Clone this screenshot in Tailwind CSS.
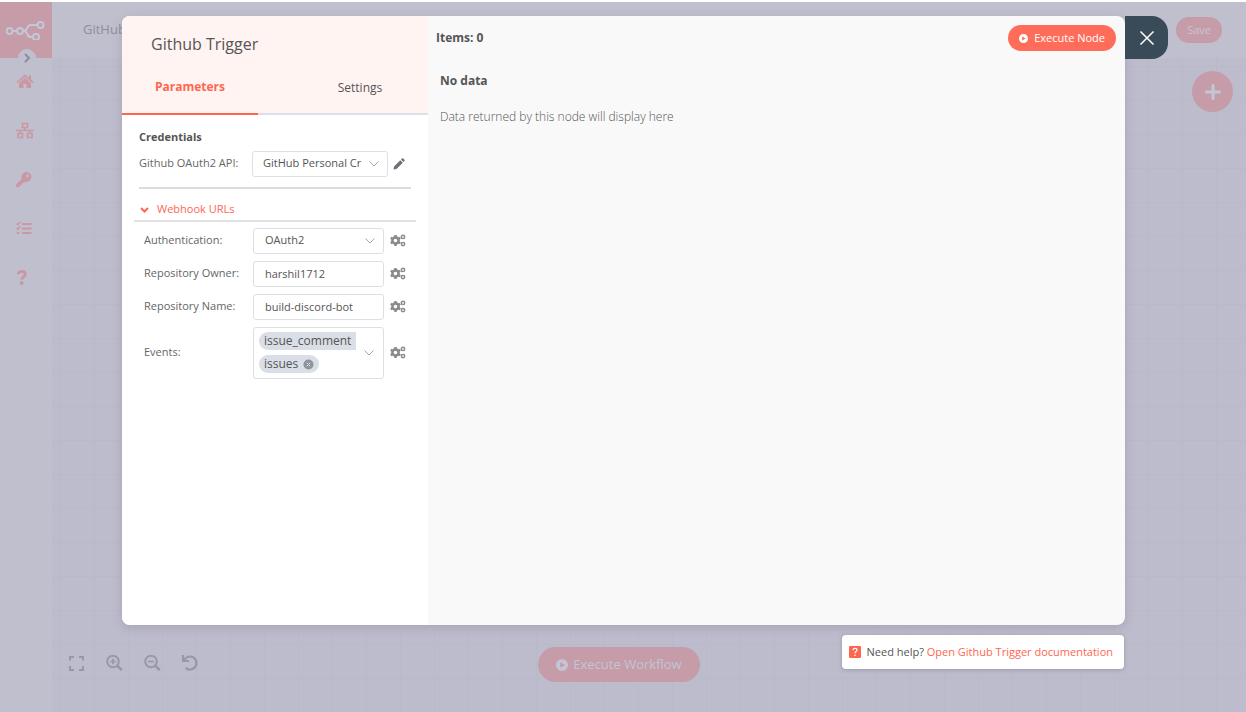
<!DOCTYPE html>
<html lang="en">
<head>
    <meta charset="UTF-8">
    <meta name="viewport" content="width=device-width, initial-scale=1.0">
    <title>GitHub - n8n</title>
    <script src="https://cdn.jsdelivr.net/npm/@tailwindcss/browser@4"></script>
</head>
<body class="h-screen overflow-hidden bg-white pt-[2px] font-['Open_Sans',sans-serif] text-[11px] text-[#555]">
    <svg class="hidden">
        <symbol id="chevron" viewBox="0 0 10 6"><path d="M.5.5 5 5 9.500.5" fill="none" stroke="#a3a6ad" /></symbol>
        <symbol id="play" viewBox="0 0 12 12"><path fill="currentColor" fill-rule="evenodd" d="M6 0a6 6 0 1 0 0 12A6 6 0 0 0 6 0ZM4.200 3.200 9 6 4.200 8.800Z" /></symbol>
        <symbol id="cogs" viewBox="0 0 16 13">
            <g fill="none" stroke="#8b8b8b">
                <circle cx="5.500" cy="6.500" r="3.100" stroke-width="2.600" />
                <path d="M5.500 1v2M5.500 10v2M.7 3.700l1.800 1.100M8.500 8.200l1.800 1.100M.7 9.300l1.800-1.100M8.500 4.800l1.800-1.100" stroke-width="2.400" />
                <circle cx="13" cy="2.900" r="1.700" stroke-width="1.500" />
                <circle cx="13" cy="10.100" r="1.700" stroke-width="1.500" />
            </g>
        </symbol>
    </svg>

    <!-- Editor behind the dialog -->
    <div class="flex h-full bg-[#bfbfce]">
        <aside class="relative w-[52px] shrink-0">
            <div class="flex h-14 items-center justify-center bg-[#c59ca8]">
                <svg class="h-5 w-10" viewBox="0 0 40 20" fill="none" stroke="#c3c8d6" stroke-width="2">
                    <circle cx="3.500" cy="11" r="3" /><circle cx="14" cy="11" r="3" />
                    <circle cx="34.500" cy="5" r="3" /><circle cx="30" cy="17" r="3" />
                    <path d="M6.500 11h4.500M17 11h1c4 0 2-6 7-6h6.500M18 11c4 0 2 6 7 6h2" />
                </svg>
            </div>
            <button class="absolute top-[47px] left-[18px] flex size-[18px] items-center justify-center rounded-full bg-[#bfbfce]" aria-label="Expand menu">
                <svg class="size-[10px]" viewBox="0 0 10 10" fill="none" stroke="#8c8c9c" stroke-width="2"><path d="m3 1 4 4-4 4" /></svg>
            </button>
            <nav class="flex flex-col items-start gap-8 pt-[15px] pl-4 text-[#ca97a3]">
                <a href="#" aria-label="Home"><svg class="h-[17px] w-[18px]" viewBox="0 0 18 17" fill="currentColor"><path d="M9 5 3 10v5h4.500v-4h3v4H15v-5Z" /><path d="M9 1.500.5 8.700l1 1.200L9 3.700l7.500 6.200 1-1.200L15 6.600V2.500h-2v2.400Z" /></svg></a>
                <a href="#" aria-label="Workflows"><svg class="h-[17px] w-[18px]" viewBox="0 0 18 17" fill="none" stroke="currentColor" stroke-width="1.600"><path d="M6.500 1.500h5v4h-5zM2 11.500h4.500v4H2zM11.500 11.500H16v4h-4.500zM9 5.500v3M4.200 11.500v-3M13.800 11.500v-3M0 8.500h18" /></svg></a>
                <a href="#" aria-label="Credentials"><svg class="h-[17px] w-[16px]" viewBox="0 0 16 17" fill="currentColor"><path fill-rule="evenodd" d="M10.500 1a5 5 0 0 0-4.700 6.800L0 13.500V16h4v-2h2v-2h2l1-1.200A5 5 0 1 0 10.500 1Zm1 2.600a1.400 1.400 0 1 1 0 2.800 1.400 1.400 0 0 1 0-2.800Z" /></svg></a>
                <a href="#" aria-label="Executions"><svg class="h-[17px] w-[16px]" viewBox="0 0 16 17" fill="none" stroke="currentColor" stroke-width="2"><path d="M6 4h9.500M6 8.500h9.500M6 13h9.500" /><path d="m.5 3.500 1.300 1.200L4.300 2M.5 8l1.300 1.200 2.500-2.700" stroke-width="1.400" /><circle cx="2" cy="13" r="1.300" fill="currentColor" stroke="none" /></svg></a>
                <a href="#" aria-label="Help"><svg class="h-[17px] w-[12px]" viewBox="0 0 12 17" fill="none" stroke="currentColor" stroke-width="2.800"><path d="M2 5c.6-1.800 1.900-2.600 3.800-2.600 2 0 3.600 1.100 3.600 2.900 0 2.300-3.600 2.500-3.600 5.200" /><circle cx="5.700" cy="14" r="1.900" fill="currentColor" stroke="none" /></svg></a>
            </nav>
        </aside>

        <div class="flex min-w-0 flex-1 flex-col">
            <header class="flex h-14 shrink-0 items-center justify-between pr-6 pl-[31px]">
                <span class="text-[13px] text-[#8f8f9d]">GitHub</span>
                <button class="h-[26px] rounded-full bg-[#c59ca8] px-[11px] text-[11px] font-medium text-[#c6c5d3]">Save</button>
            </header>
            <main class="relative flex flex-1 items-end justify-center bg-[#bcbccc] bg-[linear-gradient(90deg,#b9b9ca_1px,transparent_1px),linear-gradient(#b9b9ca_1px,transparent_1px)] bg-[size:34px_34px] bg-[position:8px_8px]">
                <button class="absolute top-[13px] right-[13px] flex size-[41px] items-center justify-center rounded-full bg-[#c59ca8]" aria-label="Add node">
                    <svg class="size-4" viewBox="0 0 16 16" stroke="#c3c8d6" stroke-width="3" stroke-linecap="round"><path d="M8 1.500v13M1.500 8h13" /></svg>
                </button>
                <div class="absolute bottom-10 left-[15px] flex gap-5 text-[#9797a8]">
                    <button aria-label="Fit view"><svg class="size-[18px]" viewBox="0 0 18 18" fill="none" stroke="currentColor" stroke-width="2"><path d="M3 6.500V3h4M12 3h4v3.500M16 12v4h-4M7 16H3v-4" /></svg></button>
                    <button aria-label="Zoom in"><svg class="size-[18px]" viewBox="0 0 18 18" fill="none" stroke="currentColor" stroke-width="2"><circle cx="8" cy="7.500" r="5.800" /><path d="m12.200 11.700 4.500 4.500" stroke-width="2.600" /><path d="M8 4.700v5.600M5.200 7.500h5.600" stroke-width="1.600" /></svg></button>
                    <button aria-label="Zoom out"><svg class="size-[18px]" viewBox="0 0 18 18" fill="none" stroke="currentColor" stroke-width="2"><circle cx="8" cy="7.500" r="5.800" /><path d="m12.200 11.700 4.500 4.500" stroke-width="2.600" /><path d="M5.200 7.500h5.600" stroke-width="1.600" /></svg></button>
                    <button aria-label="Reset zoom"><svg class="size-[18px]" viewBox="0 0 18 18" fill="none" stroke="currentColor" stroke-width="2.200"><path d="M2 1v6h6M3 6.500c1.300-2.500 3.200-4 6-4a6.500 6.500 0 1 1-4.300 11.400" /></svg></button>
                </div>
                <button class="mr-[60px] mb-[30px] flex h-[35px] items-center gap-[5px] rounded-full bg-[#c59ca8] px-[18px] text-[13px] font-medium text-[#c3c5d5]">
                    <svg class="size-3"><use href="#play" /></svg>Execute Workflow
                </button>
            </main>
        </div>
    </div>

    <!-- Node dialog -->
    <div class="absolute top-4 right-[121px] bottom-[87px] left-[122px] flex rounded-lg bg-[#f9f9f9] shadow-[0_3px_10px_rgba(120,100,120,0.25)]" role="dialog" aria-label="Github Trigger">
        <button class="absolute top-0 left-full flex size-[43px] items-center justify-center rounded-r-2xl bg-[#394b59]" aria-label="Close">
            <svg class="size-4" viewBox="0 0 16 16" stroke="#fff" stroke-width="1.500"><path d="m1.500 1.500 13 13m0-13-13 13" /></svg>
        </button>

        <section class="w-[306px] shrink-0 overflow-hidden rounded-l-lg bg-white">
            <div class="bg-[#fff4f2]">
                <h1 class="px-[29px] pt-4 text-[16px] leading-6 font-medium text-[#555]">Github Trigger</h1>
                <div class="flex justify-between border-b-2 border-[#dcdfe9] pt-4 text-[12px]">
                    <button class="-mb-[2px] h-[43px] w-[136px] border-b-2 border-[#ff6650] pb-[11px] font-bold text-[#ff6650]">Parameters</button>
                    <button class="-mb-[2px] h-[43px] w-[136px] pb-[11px]">Settings</button>
                </div>
            </div>

            <div class="px-[17px] pt-[14px]">
                <h2 class="font-bold">Credentials</h2>
                <div class="mt-[5px] flex h-[26px] items-center">
                    <label for="credential" class="w-[113px] text-[#666]">Github OAuth2 API:</label>
                    <div class="relative">
                        <select id="credential" class="h-[26px] w-[136px] appearance-none rounded-[3px] border border-[#dcdfe6] bg-white pl-[10px]"><option>GitHub Personal Cr</option></select>
                        <svg class="pointer-events-none absolute top-[10px] right-[9px] h-[6px] w-[10px]"><use href="#chevron" /></svg>
                    </div>
                    <button class="ml-[5px]" aria-label="Edit credential"><svg class="size-3" viewBox="0 0 12 12" fill="#70707a"><path d="M.5 11.500 1 8.500l6.300-6.300 2.500 2.500L3.500 11ZM8 1.500 9 .6c.4-.4.8-.4 1.200 0l1.200 1.200c.4.4.4.8 0 1.200l-1 1Z" /></svg></button>
                </div>
                <hr class="mt-[10px] border-t-2 border-[#dcdcdc]">
            </div>

            <div class="px-[12px] pt-[11px]">
                <button class="flex h-5 w-full items-center gap-2 pl-[6px] font-medium text-[#ff6650]">
                    <svg class="h-[6px] w-[9px]" viewBox="0 0 9 6" fill="none" stroke="currentColor" stroke-width="2"><path d="m1 1 3.500 3.500L8 1" /></svg>Webhook URLs
                </button>
                <hr class="border-t-2 border-[#e2e2e2]">
            </div>

            <div class="flex flex-col gap-[7px] pt-[6px] pl-[22px] text-[#666]">
                <div class="flex items-center">
                    <label for="auth" class="w-[109px]">Authentication:</label>
                    <div class="relative">
                        <select id="auth" class="h-[26px] w-[131px] appearance-none rounded-[3px] border border-[#dcdfe6] bg-white pl-[11px] text-[#555]"><option>OAuth2</option></select>
                        <svg class="pointer-events-none absolute top-[10px] right-[9px] h-[6px] w-[10px]"><use href="#chevron" /></svg>
                    </div>
                    <button class="ml-[6px]" aria-label="Authentication options"><svg class="h-[13px] w-4"><use href="#cogs" /></svg></button>
                </div>
                <div class="flex items-center">
                    <label for="owner" class="w-[109px]">Repository Owner:</label>
                    <input id="owner" type="text" value="harshil1712" class="h-[26px] w-[131px] rounded-[3px] border border-[#dcdfe6] pl-[11px] text-[#555]">
                    <button class="ml-[6px]" aria-label="Repository Owner options"><svg class="h-[13px] w-4"><use href="#cogs" /></svg></button>
                </div>
                <div class="flex items-center">
                    <label for="repo" class="w-[109px]">Repository Name:</label>
                    <input id="repo" type="text" value="build-discord-bot" class="h-[26px] w-[131px] rounded-[3px] border border-[#dcdfe6] pl-[11px] text-[#555]">
                    <button class="ml-[6px]" aria-label="Repository Name options"><svg class="h-[13px] w-4"><use href="#cogs" /></svg></button>
                </div>
                <div class="flex items-center">
                    <span id="events" class="w-[109px]">Events:</span>
                    <div class="flex h-[52px] w-[131px] items-center justify-between rounded-[3px] border border-[#dcdfe6] pr-[9px] pl-[5px]" role="group" aria-labelledby="events">
                        <div class="flex w-[97px] flex-col items-start gap-[5px] text-[12px] text-[#555]">
                            <span class="flex h-[18px] w-full items-center rounded-l-full bg-[#dadee6] pl-[5px]">issue_comment</span>
                            <span class="flex h-[18px] items-center gap-[5px] rounded-full bg-[#dadee6] px-[5px]">issues
                                <button aria-label="Remove issues"><svg class="size-[11px]" viewBox="0 0 11 11"><circle cx="5.500" cy="5.500" r="5" fill="#909399" /><path d="m3.700 3.700 3.600 3.600m0-3.600L3.700 7.300" stroke="#dadee6" /></svg></button>
                            </span>
                        </div>
                        <button aria-label="Show events"><svg class="h-[6px] w-[10px]"><use href="#chevron" /></svg></button>
                    </div>
                    <button class="ml-[6px]" aria-label="Events options"><svg class="h-[13px] w-4"><use href="#cogs" /></svg></button>
                </div>
            </div>
        </section>

        <section class="min-w-0 flex-1">
            <div class="flex items-center justify-between pt-[9px] pr-[9px] pl-2">
                <strong class="text-[12px]">Items: 0</strong>
                <button class="flex h-[26px] items-center gap-[6px] rounded-full bg-[#ff6d5a] px-[11px] font-medium text-white">
                    <svg class="size-[9px]"><use href="#play" /></svg>Execute Node
                </button>
            </div>
            <div class="px-3 pt-5">
                <h2 class="text-[12px] leading-5 font-bold">No data</h2>
                <p class="mt-4 text-[12px] leading-5 font-light">Data returned by this node will display here</p>
            </div>
        </section>
    </div>

    <div class="absolute right-[122px] bottom-[43px] flex h-[34px] items-center gap-[6px] rounded-[4px] bg-white pr-[11px] pl-[7px] shadow-[0_1px_4px_rgba(80,80,110,0.3)]">
        <svg class="size-3" viewBox="0 0 12 12"><rect width="12" height="12" rx="1" fill="#ff6650" /><path d="M4 4.200C4.200 3 5 2.400 6 2.400s2 .7 2 1.700C8 5.500 6 5.500 6 7.300" fill="none" stroke="#fff" stroke-width="1.200" /><circle cx="6" cy="9.300" r=".8" fill="#fff" /></svg>
        <p>Need help? <a href="#" class="text-[#ff6650]">Open Github Trigger documentation</a></p>
    </div>
</body>
</html>
